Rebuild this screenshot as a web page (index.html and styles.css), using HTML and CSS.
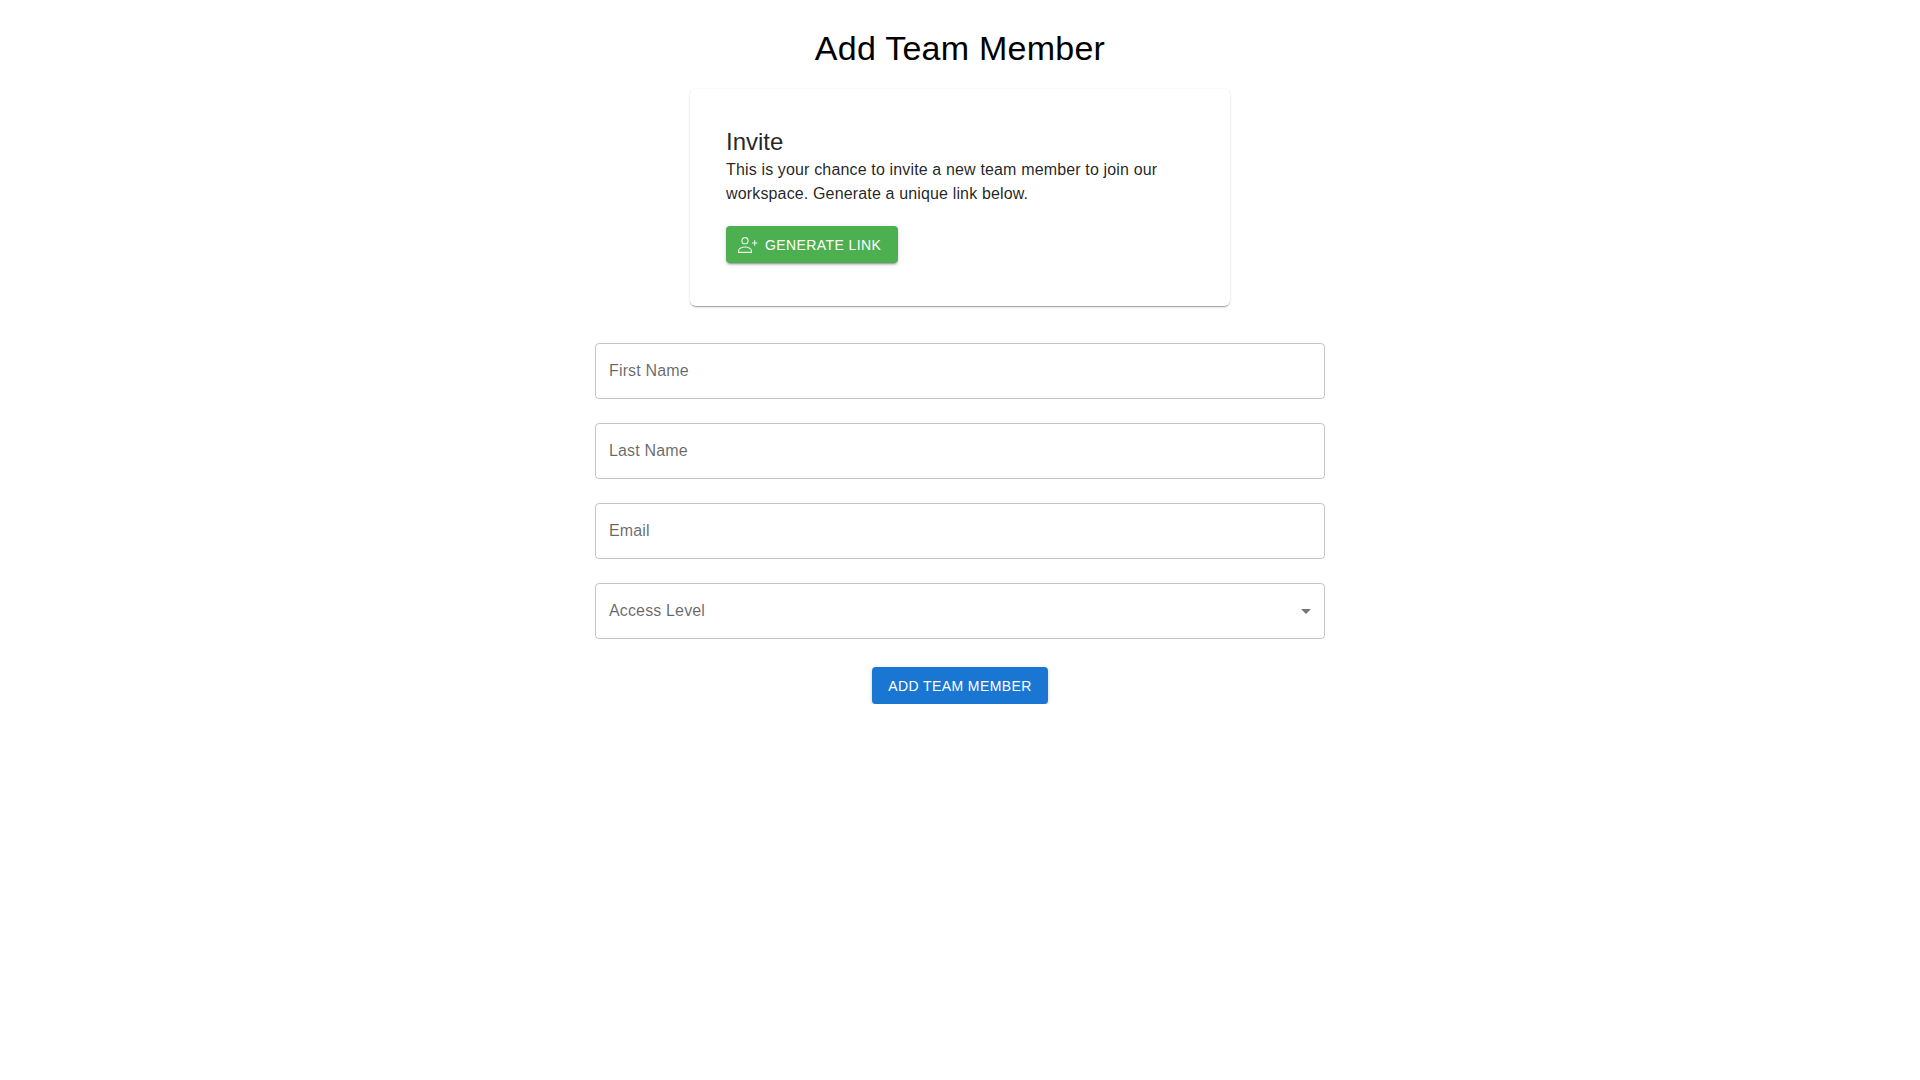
FILE: index.html
```html
<!DOCTYPE html>
<html lang="en">
<head>
    <meta charset="UTF-8">
    <meta name="viewport" content="width=device-width, initial-scale=1.0">
    <title>Add Team Member</title>
    <link rel="stylesheet" href="styles.css">
</head>
<body>
    <h1 class="baslik">Add Team Member</h1>

    <div class="kart">
        <h2 class="kart-baslik">Invite</h2>
        <p class="kart-metin">This is your chance to invite a new team member to join our workspace. Generate a unique link below.</p>
        <button type="button" class="btn btn-yesil">
            <svg class="btn-ikon" viewBox="0 0 20 16" width="20" height="16" fill="none" stroke="currentColor" stroke-width="1.1">
                <circle cx="7" cy="3.7" r="3.1"/>
                <path d="M0.6 13.6c0-2.300 3.600-3.600 6.400-3.600s6.400 1.300 6.400 3.600v1.800H0.600z"/>
                <path d="M14 6h5.400M16.700 3.300v5.400"/>
            </svg>
            Generate Link
        </button>
    </div>

    <form class="form">
        <div class="alan">First Name</div>
        <div class="alan">Last Name</div>
        <div class="alan">Email</div>
        <div class="alan alan-secim">
            Access Level
            <svg class="ok" viewBox="0 0 24 24" width="24" height="24" fill="currentColor"><path d="M7 10l5 5 5-5z"/></svg>
        </div>
        <button type="button" class="btn btn-mavi">Add Team Member</button>
    </form>
</body>
</html>
```

FILE: styles.css
```css
*{
    margin: 0;
    padding: 0;
    box-sizing: border-box;
}
body{
    background-color: #fff;
    font-family: "Liberation Sans", Arial, sans-serif;
    color: rgba(0, 0, 0, 0.87);
}
.baslik{
    font-size: 34px;
    font-weight: 400;
    line-height: 42px;
    color: #000;
    text-align: center;
    letter-spacing: 0.25px;
    padding-top: 27px;
}
.kart{
    width: 540px;
    margin: 20px auto 0;
    padding: 37px 36px 0;
    height: 217px;
    background-color: #fff;
    border-radius: 6px;
    box-shadow: 0 2px 1px -1px rgba(0,0,0,0.2), 0 1px 1px 0 rgba(0,0,0,0.14), 0 1px 3px 0 rgba(0,0,0,0.12);
}
.kart-baslik{
    font-size: 24px;
    font-weight: 400;
    line-height: 32px;
}
.kart-metin{
    font-size: 16px;
    line-height: 24px;
    letter-spacing: 0.15px;
    margin-bottom: 20px;
}
.btn{
    display: inline-flex;
    align-items: center;
    justify-content: center;
    height: 37px;
    border: none;
    border-radius: 4px;
    color: #fff;
    font-family: inherit;
    font-size: 14px;
    letter-spacing: 0.4px;
    text-transform: uppercase;
    box-shadow: 0 3px 1px -2px rgba(0,0,0,0.2), 0 2px 2px 0 rgba(0,0,0,0.14), 0 1px 5px 0 rgba(0,0,0,0.12);
}
.btn-yesil{
    width: 172px;
    justify-content: flex-start;
    padding-left: 12px;
    background-color: #4caf50;
}
.btn-ikon{
    margin-right: 7px;
    opacity: 0.9;
}
.btn-mavi{
    width: 176px;
    margin-top: 4px;
    background-color: #1976d2;
}
.form{
    width: 730px;
    margin: 37px auto 0;
    display: flex;
    flex-direction: column;
    align-items: center;
    gap: 24px;
}
.alan{
    width: 100%;
    height: 56px;
    display: flex;
    align-items: center;
    justify-content: space-between;
    padding: 0 6px 0 13px;
    border: 1px solid rgba(0, 0, 0, 0.23);
    border-radius: 4px;
    font-size: 16px;
    letter-spacing: 0.15px;
    color: rgba(0, 0, 0, 0.6);
}
.ok{
    color: rgba(0, 0, 0, 0.54);
}
```
